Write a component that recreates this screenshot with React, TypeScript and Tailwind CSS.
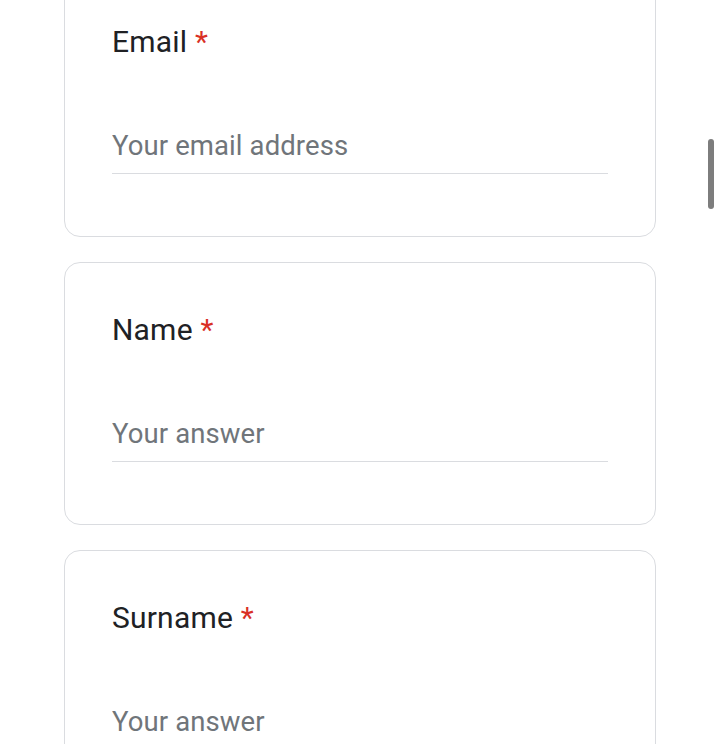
import React from 'react';

const questions = [
  { label: 'Email', placeholder: 'Your email address' },
  { label: 'Name', placeholder: 'Your answer' },
  { label: 'Surname', placeholder: 'Your answer' },
];

const QuestionCard = ({ label, placeholder }: { label: string; placeholder: string }) => (
  <div className="rounded-[16px] border border-[#dadce0] bg-white px-[47px] pt-[48px] pb-[62px]">
    <div className="text-[30px] leading-[37px] tracking-[0.2px] text-[#202124]">
      {label} <span className="text-[#d93025]">*</span>
    </div>
    <div className="mt-[70px] border-b border-[#dadce0] pb-[11px]">
      <input
        type="text"
        placeholder={placeholder}
        className="block w-full bg-transparent text-[27.5px] leading-[32px] tracking-[0.1px] text-[#202124] outline-none placeholder:text-[#70757a]"
      />
    </div>
  </div>
);

export default function App() {
  return (
    <div className="relative h-[744px] overflow-hidden bg-white font-['Roboto',sans-serif]">
      <div className="-mt-[26px] flex flex-col gap-[25px] px-[64px]">
        {questions.map((q) => (
          <QuestionCard key={q.label} label={q.label} placeholder={q.placeholder} />
        ))}
      </div>
      <div className="absolute left-[708px] top-[139px] h-[70px] w-[6px] rounded-full bg-[#7d7d7d]" />
    </div>
  );
}
